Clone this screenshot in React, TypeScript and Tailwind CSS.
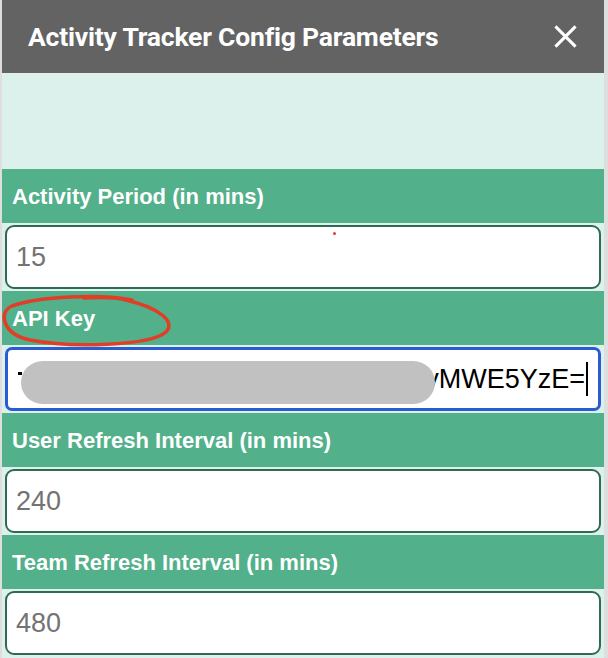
import React from 'react';

const fields = [
  { label: 'Activity Period (in mins)', value: '15' },
  { label: 'API Key', value: 'yMWE5YzE=', focused: true },
  { label: 'User Refresh Interval (in mins)', value: '240' },
  { label: 'Team Refresh Interval (in mins)', value: '480' },
];

const App: React.FC = () => {
  return (
    <div className="w-[608px] h-[658px] bg-[#dedede] pl-[2px] pr-[4px] overflow-hidden">
      <div className="relative h-full flex flex-col bg-[#dcf1eb]">
        <header className="h-[73px] shrink-0 bg-[#636363] flex items-center justify-between pl-[26px] pr-[27px]">
          <h1 className="font-['Roboto',sans-serif] font-bold text-[26.5px] text-white tracking-[-0.2px]">
            Activity Tracker Config Parameters
          </h1>
          <button className="w-[23px] h-[23px] text-white">
            <svg viewBox="0 0 24 24" className="w-full h-full" fill="none" stroke="currentColor" strokeWidth="3.2">
              <path d="M1.5 1.5L22.5 22.5M22.5 1.5L1.5 22.5" />
            </svg>
          </button>
        </header>

        <div className="h-[96px] shrink-0" />

        {fields.map((f) => (
          <div key={f.label} className="flex flex-col">
            <div className="h-[54px] bg-[#52b08a] flex items-center pl-[10px]">
              <span className="font-['Liberation_Sans',Arial,sans-serif] font-bold text-[22px] text-white">
                {f.label}
              </span>
            </div>
            {f.focused ? (
              <div className="relative mx-[3px] my-[2px] h-[64px] rounded-[7px] border-[3px] border-[#2a5bd0] bg-white flex items-center justify-end pr-[10px] overflow-hidden">
                <span className="absolute left-[10px] top-[22px] w-[4px] h-[3px] bg-black" />
                <div className="absolute left-[13px] top-[11px] w-[414px] h-[43px] rounded-full bg-[#c1c1c1]" />
                <span className="font-['Liberation_Sans',Arial,sans-serif] text-[27px] text-black leading-none">
                  {f.value}
                </span>
                <span className="ml-[1px] w-[2px] h-[34px] bg-black" />
              </div>
            ) : (
              <div className="mx-[3px] my-[2px] h-[64px] rounded-[9px] border-2 border-[#2f6b52] bg-white flex items-center pl-[9px]">
                <span className="font-['Liberation_Sans',Arial,sans-serif] text-[27px] text-[#737373] leading-none">
                  {f.value}
                </span>
              </div>
            )}
          </div>
        ))}

        {/* annotation overlay */}
        <svg className="absolute left-[-2px] top-[292px] pointer-events-none" width="175" height="60" viewBox="0 0 175 60" fill="none">
          <path
            d="M132 8 C100 2 40 4 12 14 C-2 20 2 42 30 48 C70 56 150 54 166 40 C176 30 160 16 126 8 C110 4 90 6 84 6"
            stroke="#e23d26"
            strokeWidth="3.5"
            strokeLinecap="round"
          />
        </svg>
        <span className="absolute left-[331px] top-[232px] w-[3px] h-[3px] rounded-full bg-[#e23d26]" />
      </div>
    </div>
  );
};

export default App;
